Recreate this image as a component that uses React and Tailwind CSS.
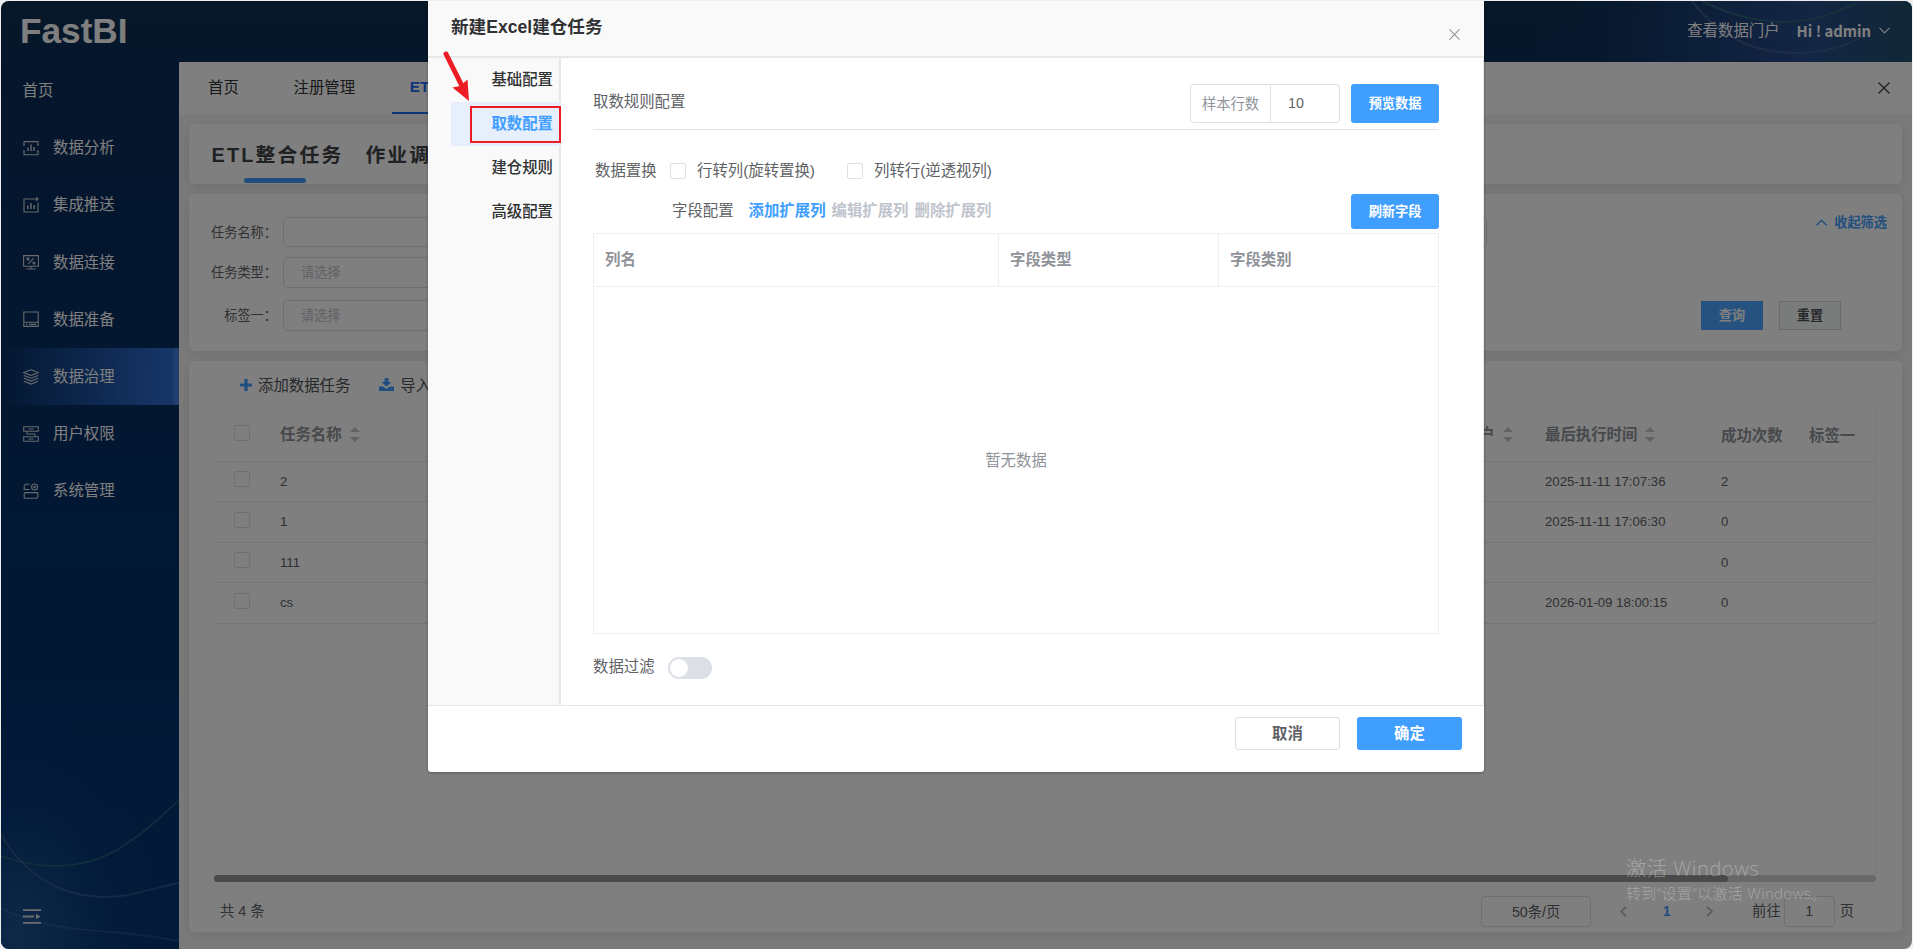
import React, { useState } from 'react';

const menuItems = [
  { label: '数据分析', icon: 'analysis' },
  { label: '集成推送', icon: 'push' },
  { label: '数据连接', icon: 'connect' },
  { label: '数据准备', icon: 'prepare' },
  { label: '数据治理', icon: 'govern' },
  { label: '用户权限', icon: 'users' },
  { label: '系统管理', icon: 'system' },
];

const tasks = [
  { name: '2', lastRun: '2025-11-11 17:07:36', success: 2 },
  { name: '1', lastRun: '2025-11-11 17:06:30', success: 0 },
  { name: '111', lastRun: '', success: 0 },
  { name: 'cs', lastRun: '2026-01-09 18:00:15', success: 0 },
];

const steps = ['基础配置', '取数配置', '建仓规则', '高级配置'];

const iconPaths = {
  analysis: (
    <>
      <path d="M1 5V1.6h14V5M1 11v3.8h14V11M0 5h2M14 5h2M0 11h2M14 11h2" />
      <path d="M5 7.5V11M8 4.5V11M11 7v4" strokeWidth="1.4" />
    </>
  ),
  push: (
    <>
      <path d="M10 2H1v13h14V5.5M10 2h5M13 .2L15 2l-2 1.8" />
      <path d="M4.8 8.5V12M8 6v6M11.2 8v4" strokeWidth="1.4" />
    </>
  ),
  connect: (
    <>
      <path d="M.6 1.6h14.8v10.6H.6zM8 12.2v2.6M3.5 15h9M5.2 9.8l5.6-5.6" />
      <circle cx="5" cy="4.9" r="1" />
      <circle cx="11" cy="9" r="1" />
    </>
  ),
  prepare: (
    <>
      <path d="M.8 1h14.4v14.4H.8zM.8 11.2h14.4" />
      <path d="M3 13.4h1.2M6 13.4h7" />
    </>
  ),
  govern: (
    <>
      <path d="M8 .8l7.2 2.8L8 6.4.8 3.6z" />
      <path d="M.8 6.4L8 9.2l7.2-2.8M.8 9.3L8 12.1l7.2-2.8M.8 12.3L8 15.1l7.2-2.8" />
    </>
  ),
  users: (
    <>
      <path d="M.7.8h14.6v4.4H.7zM.7 10.8h14.6v4.4H.7z" />
      <path d="M4 5.2V8h8v2.8M5.5 3h5M5.5 13h5" />
    </>
  ),
  system: (
    <>
      <path d="M6.5 1.2H2.8L1.2 2.8v3.7h5.3" />
      <circle cx="11.6" cy="4" r="3" />
      <circle cx="11.6" cy="4" r=".7" />
      <path d="M2.2 9.6h12.6v4.4l-1.2 1.2H1.2v-4.6z" />
    </>
  ),
};

const MenuIcon = ({ name }) => (
  <svg className="w-4 h-4 shrink-0" viewBox="0 0 16 16" fill="none" stroke="#d0d4da" strokeWidth="1.1">
    {iconPaths[name]}
  </svg>
);

const Cross = ({ className }) => (
  <svg className={className} viewBox="0 0 12 12" fill="none" stroke="currentColor" strokeWidth="1.1">
    <path d="M.5.5l11 11M11.5.5l-11 11" />
  </svg>
);

const SortIcon = () => (
  <svg className="w-[10px] h-[15px] ml-2 shrink-0" viewBox="0 0 10 15" fill="#c0c4cc">
    <path d="M0 5L5 0l5 5zM0 10l5 5 5-5z" />
  </svg>
);

const Checkbox = () => <span className="block w-4 h-4 shrink-0 rounded-[2px] border border-[#dcdfe6] bg-white" />;

const TopBar = () => (
  <header className="relative flex items-center justify-between h-[61px] shrink-0 pl-[19px] pr-[22px] bg-linear-to-b from-[#0c3050] to-[#0c2e58]">
    <svg className="absolute right-0 top-0 w-[400px] h-[61px]" viewBox="0 0 400 61" fill="none">
      <defs>
        <linearGradient id="topGlow" x1="0" x2="1" y1="0" y2="0">
          <stop offset="0" stopColor="#0c2e58" stopOpacity="0" />
          <stop offset=".45" stopColor="#1a3c72" />
          <stop offset=".75" stopColor="#264c88" />
          <stop offset="1" stopColor="#22506e" />
        </linearGradient>
      </defs>
      <rect width="400" height="61" fill="url(#topGlow)" />
      <path d="M180 0C205 34 240 53 288 52C315 52 340 42 358 32" stroke="#3f5c8c" strokeWidth="2" />
      <path d="M190 0C225 17 250 21 275 21C305 20 322 12 344 2" stroke="#2a647a" strokeWidth="2" />
    </svg>
    <h1 className="relative font-['Liberation_Sans',sans-serif] font-bold text-[35.2px] leading-none text-white -mt-px">FastBI</h1>
    <div className="relative flex items-center text-white -mt-px">
      <span className="text-[15.4px]">查看数据门户</span>
      <span className="ml-[17px] font-['Noto_Sans_CJK_SC',sans-serif] font-bold text-[14.8px]">Hi ! admin</span>
      <svg className="w-[11px] h-[7px] ml-2" viewBox="0 0 11 7" fill="none" stroke="currentColor" strokeWidth="1.2">
        <path d="M.5.8l5 5 5-5" />
      </svg>
    </div>
  </header>
);

const Sidebar = () => (
  <aside className="relative flex flex-col w-[178px] shrink-0 bg-linear-to-b from-[#0b2c58] via-[#02306a] via-65% to-[#063474] text-[15.4px] text-white">
    <svg className="absolute left-0 bottom-0 w-[178px] h-[260px]" viewBox="0 0 178 260" fill="none">
      <defs>
        <radialGradient id="sideGlow" cx="0.1" cy="0.95" r="0.9">
          <stop offset="0" stopColor="#205a98" stopOpacity=".85" />
          <stop offset="1" stopColor="#02306c" stopOpacity="0" />
        </radialGradient>
      </defs>
      <rect width="178" height="260" fill="url(#sideGlow)" />
      <path d="M0 167C45 183 90 180 125 155C145 142 160 128 178 111" stroke="#2b6a80" strokeOpacity=".7" strokeWidth="1.8" />
      <path d="M0 145C25 190 65 208 105 208C130 208 152 199 178 194" stroke="#5575a0" strokeOpacity=".45" strokeWidth="1.8" />
      <path d="M0 219C40 240 90 241 120 244C145 246 160 249 178 252" stroke="#5575a0" strokeOpacity=".35" strokeWidth="1.8" />
    </svg>
    <nav className="relative flex flex-col">
      <a className="flex items-center h-[57.2px] pl-[21.5px]">首页</a>
      {menuItems.map((item) => {
        const active = item.label === '数据治理';
        return (
          <a
            key={item.label}
            className={`relative flex items-center h-[57.2px] pl-[22px] gap-[14px] ${
              active ? 'bg-linear-to-r from-transparent to-[#3e86ff]/75' : ''
            }`}
          >
            <MenuIcon name={item.icon} />
            <span>{item.label}</span>
            {active && <span className="absolute right-0 inset-y-0 w-[6px] rounded-l-[4px] bg-white/10" />}
          </a>
        );
      })}
    </nav>
    <svg className="relative w-[18px] h-[15px] mt-auto mb-[25px] ml-[22px]" viewBox="0 0 18 15" fill="#d8dce2">
      <path d="M0 .3h18v1.8H0zM0 6.6h11v1.8H0zM13 4.7l4.5 2.8L13 10.3zM0 12.9h18v1.8H0z" />
    </svg>
  </aside>
);

const PageTabs = () => (
  <div className="flex items-stretch h-[52px] shrink-0 pl-[11px] pr-[22px] bg-white text-[15.4px] text-[#303133]">
    <div className="flex gap-[18.7px]">
      <span className="flex items-center px-[18px]">首页</span>
      <span className="flex items-center px-[18px]">注册管理</span>
      <span className="flex items-center px-[18px] border-b-2 border-[#1a6af0] text-[#1a6af0] font-bold">ETL整合任务</span>
    </div>
    <Cross className="w-[12px] h-[12px] ml-auto self-center" />
  </div>
);

const FilterCard = () => (
  <section className="flex h-[157px] shrink-0 rounded-[5px] bg-white shadow-[0_2px_12px_rgba(0,0,0,0.1)] text-[13.2px] text-[#606266]">
    <div className="flex flex-col pt-[23px] w-[1298px]">
      <label className="flex items-center h-[30px]">
        <span className="w-[94px] pr-[6px] pt-px text-right">任务名称：</span>
        <span className="flex-1 h-[30px] rounded-[4px] border border-[#dcdfe6]" />
      </label>
      <label className="flex items-center h-[31px] mt-[10px]">
        <span className="w-[94px] pr-[6px] text-right">任务类型：</span>
        <span className="flex items-center w-[260px] h-[31px] pl-[17px] rounded-[4px] border border-[#dcdfe6] text-[#c0c4cc]">请选择</span>
      </label>
      <label className="flex items-center h-[31px] mt-[12px]">
        <span className="w-[94px] pr-[6px] text-right">标签一：</span>
        <span className="flex items-center w-[260px] h-[31px] pl-[17px] rounded-[4px] border border-[#dcdfe6] text-[#c0c4cc]">请选择</span>
      </label>
    </div>
    <div className="flex flex-col flex-1 pt-[19px] pr-[15px]">
      <button className="flex items-center self-end font-bold text-[#409eff]">
        <svg className="w-[11px] h-[7px] mr-[7px]" viewBox="0 0 11 7" fill="none" stroke="currentColor" strokeWidth="1.4">
          <path d="M.5 6.2l5-5 5 5" />
        </svg>
        收起筛选
      </button>
      <div className="flex gap-4 mt-auto mb-[21px] pl-[214px] font-bold">
        <button className="w-[62px] h-[29px] bg-[#4ca4ff] text-white">查询</button>
        <button className="w-[62px] h-[29px] border border-[#d3d8d6] bg-[#f5f9f8] text-[#505356]">重置</button>
      </div>
    </div>
  </section>
);

const gridCols = 'grid grid-cols-[66px_1153px_112px_176px_88px_1fr] items-center';

const TaskCard = () => (
  <section className="flex flex-col h-[571px] shrink-0 pl-[25px] pr-[25px] rounded-[5px] bg-white shadow-[0_2px_12px_rgba(0,0,0,0.1)]">
    <div className="flex items-center h-[49px] pl-[26px] text-[15.4px] text-[#505256]">
      <svg className="w-[12px] h-[12px] mr-[6px] mb-px" viewBox="0 0 12 12" stroke="#409eff" strokeWidth="3.2">
        <path d="M6 0v12M0 6h12" />
      </svg>
      添加数据任务
      <svg className="w-[15px] h-[13px] ml-[29px] mr-[6px] mb-[2px]" viewBox="0 0 15 13" fill="#409eff">
        <path d="M5.6 0h3.8v4h3L7.5 8.7 2.6 4h3z" />
        <path d="M0 8.6h4.2l3.3 2.3 3.3-2.3H15V13H0z" />
      </svg>
      导入
    </div>
    <div className="h-[465px] w-[1662px] border-r border-[#ebeef5]">
      <div className={`${gridCols} h-[51.5px] border-b border-[#e6e9f0] text-[15.4px] font-bold text-[#909399]`}>
        <span className="pl-5 pb-1"><Checkbox /></span>
        <span className="flex items-center pb-[1px]">任务名称<SortIcon /></span>
        <span className="flex items-center pb-[1px]">创建用户<SortIcon /></span>
        <span className="flex items-center pb-[1px]">最后执行时间<SortIcon /></span>
        <span>成功次数</span>
        <span>标签一</span>
      </div>
      {tasks.map((task) => (
        <div key={task.name} className={`${gridCols} h-[40.5px] border-b border-[#e6e9f0] text-[13.2px] text-[#606266]`}>
          <span className="pl-5 pb-1"><Checkbox /></span>
          <span className="pt-px">{task.name}</span>
          <span />
          <span className="pt-px">{task.lastRun}</span>
          <span className="pt-px">{task.success}</span>
          <span />
        </div>
      ))}
    </div>
    <div className="h-[7px] w-[1662px] rounded-[4px] bg-[#d0d0d0]">
      <div className="h-[7px] w-[1514px] rounded-[4px] bg-[#949494]" />
    </div>
    <div className="flex items-center h-[31px] mt-[14px] pl-[6px] pr-[23px] text-[14.3px] text-[#606266]">
      <span>共 4 条</span>
      <span className="flex items-center justify-center w-[110px] h-[31px] ml-auto pt-[2px] rounded-[4px] border border-[#dcdfe6]">50条/页</span>
      <svg className="w-[7px] h-[11px] ml-[29px]" viewBox="0 0 7 11" fill="none" stroke="#b0b3ba" strokeWidth="1.7">
        <path d="M6 .8L1.2 5.5 6 10.2" />
      </svg>
      <span className="w-[79px] text-center font-bold text-[#409eff]">1</span>
      <svg className="w-[7px] h-[11px]" viewBox="0 0 7 11" fill="none" stroke="#b0b3ba" strokeWidth="1.7">
        <path d="M1 .8l4.8 4.7L1 10.2" />
      </svg>
      <span className="ml-[39px]">前往</span>
      <span className="flex items-center justify-center w-[51px] h-[31px] ml-[3px] mr-[5px] rounded-[4px] border border-[#dcdfe6]">1</span>
      <span>页</span>
    </div>
  </section>
);

const ExcelDialog = () => {
  const [step, setStep] = useState('取数配置');

  return (
    <div className="relative flex flex-col w-[1056px] h-[771px] rounded-b-[3px] bg-white text-[15.4px] text-[#606266] shadow-[0_1px_3px_rgba(0,0,0,0.3)]">
      <div className="flex items-center justify-between h-[57px] shrink-0 pl-[23px] pr-[24.5px] pb-[1px] border-b-2 border-[#e8e8e8] bg-[#f9f9f9]">
        <h2 className="text-[17.6px] leading-none font-bold text-[#303133]">新建Excel建仓任务</h2>
        <Cross className="w-[11px] h-[11px] mt-[12px] text-[#909399]" />
      </div>

      <div className="flex h-[648px] shrink-0 border-b border-r border-[#e6e6e6]">
        <div className="w-[133px] shrink-0 pl-[23px] border-r-2 border-[#e4e7ed] bg-[#f9f9f9]">
          {steps.map((label) => (
            <button
              key={label}
              onClick={() => setStep(label)}
              className={`flex items-center justify-end w-[110px] h-[44px] pr-[8px] ${
                step === label ? 'bg-[#e6effb] font-bold text-[#409eff]' : 'font-medium text-[#303133]'
              }`}
            >
              {label}
            </button>
          ))}
        </div>

        <div className="flex flex-col flex-1 pl-8 pr-[44px]">
          <div className="flex items-end h-[72px] pb-[6px] border-b border-[#e2e4e8]">
            <span className="pb-[10px]">取数规则配置</span>
            <div className="flex w-[150px] h-[39px] ml-auto rounded-[4px] border border-[#dcdfe6]">
              <span className="flex items-center justify-center w-[80px] pt-[3px] border-r border-[#dcdfe6] text-[14.3px] text-[#909399]">样本行数</span>
              <span className="flex items-center pl-[17px] pt-px text-[14.3px]">10</span>
            </div>
            <button className="w-[88px] h-[39px] ml-[11px] rounded-[3px] bg-[#409eff] text-[13.2px] font-bold text-white">预览数据</button>
          </div>

          <div className="flex items-center h-[64px] pt-[18px] pl-[2px]">
            <span className="w-[75px]">数据置换</span>
            <Checkbox />
            <span className="ml-[11px] w-[150px]">行转列(旋转置换)</span>
            <Checkbox />
            <span className="ml-[11px]">列转行(逆透视列)</span>
          </div>

          <div className="flex items-center h-[35px] pl-[79px]">
            <span className="pb-[1px]">字段配置</span>
            <div className="flex items-center gap-[6px] ml-[15px] pb-[1px] font-bold text-[#c0c4cc]">
              <span className="text-[#409eff]">添加扩展列</span>
              <span>编辑扩展列</span>
              <span>删除扩展列</span>
            </div>
            <button className="w-[88px] h-[35px] ml-auto rounded-[3px] bg-[#409eff] text-[13.2px] font-bold text-white">刷新字段</button>
          </div>

          <div className="flex flex-col h-[401px] mt-[4px] border border-[#ebeef5]">
            <div className="grid grid-cols-[405px_220px_1fr] h-[53px] border-b border-[#ebeef5] font-bold text-[#909399]">
              <span className="flex items-center pl-[11px] border-r border-[#ebeef5]">列名</span>
              <span className="flex items-center pl-[11px] border-r border-[#ebeef5]">字段类型</span>
              <span className="flex items-center pl-[11px]">字段类别</span>
            </div>
            <div className="flex flex-1 items-center justify-center pt-[2px] text-[#909399]">暂无数据</div>
          </div>

          <div className="flex items-center mt-[21px]">
            <span>数据过滤</span>
            <span className="flex items-center w-[44px] h-[22px] ml-[13px] mt-[2px] pl-[2px] rounded-full bg-[#dcdfe6]">
              <span className="w-[18px] h-[18px] rounded-full bg-white" />
            </span>
          </div>
        </div>
      </div>

      <div className="flex justify-end gap-[17px] pt-[11px] pr-[22px] font-bold">
        <button className="w-[105px] h-[33px] rounded-[3px] border border-[#dcdfe6]">取消</button>
        <button className="w-[105px] h-[33px] rounded-[3px] bg-[#409eff] text-white">确定</button>
      </div>

      {/* marker around the active step */}
      <div className="absolute left-[42px] top-[105px] w-[91px] h-[37px] border-2 border-[#ed1c24]" />
      <svg className="absolute left-[14px] top-[48px] w-[30px] h-[54px]" viewBox="0 0 30 54">
        <path d="M4 5L20 37" stroke="#ed1c24" strokeWidth="5" strokeLinecap="round" />
        <path d="M27 52L10.5 38.5L18 37L25.5 30.5z" fill="#ed1c24" />
      </svg>
    </div>
  );
};

export default function App() {
  return (
    <div className="relative w-[1913px] h-[949px] pl-px pt-px pr-px overflow-hidden bg-[#eeeeee] font-['Liberation_Sans','Noto_Sans_CJK_SC',sans-serif]">
      <div className="relative flex flex-col h-[948px] rounded-[8px] overflow-hidden bg-[#f5f5f5]">
        <TopBar />
        <div className="flex flex-1 min-h-0">
          <Sidebar />
          <main className="flex flex-col flex-1 min-w-0">
            <PageTabs />
            <div className="flex flex-col gap-[10px] p-[10px]">
              <section className="flex h-[60px] shrink-0 pl-[22.5px] gap-[22px] rounded-[5px] bg-white shadow-[0_2px_12px_rgba(0,0,0,0.1)] text-[19.8px] tracking-[2.2px] font-bold text-[#404244]">
                <div className="relative flex items-center pt-[3px]">
                  ETL整合任务
                  <span className="absolute left-[32px] bottom-[1px] w-[62px] h-[5px] rounded-[3px] bg-[#409eff]" />
                </div>
                <div className="flex items-center pt-[3px]">作业调度</div>
              </section>
              <FilterCard />
              <TaskCard />
            </div>
          </main>
        </div>

        <div className="absolute inset-0 flex items-start bg-black/50 pl-[427px]">
          <ExcelDialog />
        </div>
      </div>

      <div className="absolute left-[1626px] top-[855px] font-['Open_Sans','Noto_Sans_CJK_SC',sans-serif] font-light text-white/30 whitespace-nowrap">
        <p className="text-[20.4px] leading-[27px] tracking-[0.4px]">激活 Windows</p>
        <p className="text-[15px] leading-[22px] tracking-[0.35px]">转到“设置”以激活 Windows。</p>
      </div>
    </div>
  );
}
